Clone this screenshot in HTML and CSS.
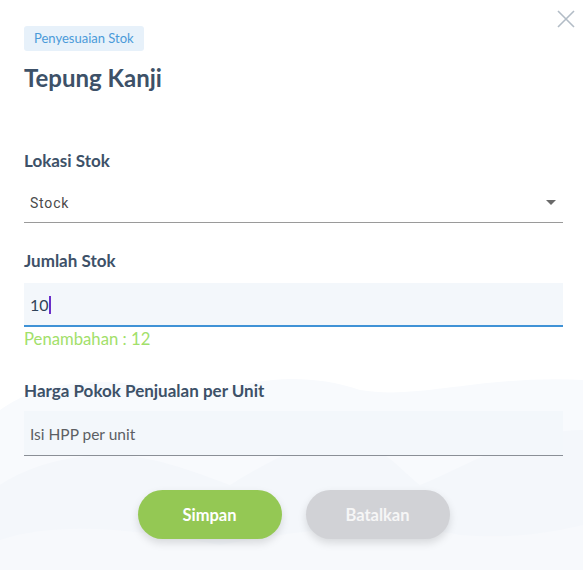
FILE: index.html
```html
<!DOCTYPE html>
<html lang="id">
<head>
<meta charset="utf-8">
<title>Penyesuaian Stok</title>
<link rel="stylesheet" href="styles.css">
</head>
<body>
<div class="modal">
  <svg class="hills" width="583" height="200" viewBox="0 0 583 200" preserveAspectRatio="none" aria-hidden="true">
    <path d="M0 40 C 40 10, 120 0, 200 30 C 240 10, 300 0, 360 20 C 420 30, 480 5, 583 10 L583 200 L0 200 Z" fill="#f8fafd"/>
    <path d="M0 115 C 30 95, 70 85, 110 85 C 150 85, 190 100, 230 115 C 270 90, 310 70, 340 70 C 380 70, 400 100, 420 115 C 470 95, 520 60, 583 60 L583 200 L0 200 Z" fill="#f4f7fb"/>
    <path d="M0 170 C 60 150, 140 160, 220 175 C 300 160, 380 150, 460 165 C 520 170, 560 160, 583 155 L583 200 L0 200 Z" fill="#f7f9fc"/>
  </svg>

  <button class="close" type="button" aria-label="Tutup">
    <svg width="18" height="18" viewBox="0 0 18 18"><path d="M1 1 L17 17 M17 1 L1 17" stroke="#b2bcc6" stroke-width="1.6" fill="none"/></svg>
  </button>

  <span class="badge">Penyesuaian Stok</span>
  <h1 class="title">Tepung Kanji</h1>

  <div class="field field-first">
    <div class="label">Lokasi Stok</div>
    <div class="select">
      <span class="select-value">Stock</span>
      <span class="caret-down"></span>
    </div>
  </div>

  <div class="field field-second">
    <div class="label">Jumlah Stok</div>
    <div class="input input-active"><span class="value">10</span><span class="cursor"></span></div>
    <div class="helper">Penambahan : 12</div>
  </div>

  <div class="field field-third">
    <div class="label">Harga Pokok Penjualan per Unit</div>
    <div class="input input-plain"><span class="placeholder">Isi HPP per unit</span></div>
  </div>

  <div class="actions">
    <button class="btn btn-save" type="button">Simpan</button>
    <button class="btn btn-cancel" type="button">Batalkan</button>
  </div>
</div>
</body>
</html>
```

FILE: styles.css
```css
* { box-sizing: border-box; }
html, body { margin: 0; padding: 0; background: #ffffff; }
body {
  font-family: Lato, "Open Sans", sans-serif;
  color: #3d5168;
  width: 583px;
  height: 570px;
  overflow: hidden;
}
.modal {
  position: relative;
  width: 583px;
  height: 570px;
  padding: 26px 20px 0 24px;
  display: flex;
  flex-direction: column;
  align-items: flex-start;
}
.hills {
  position: absolute;
  left: 0;
  bottom: 0;
  z-index: 0;
}
.modal > *:not(.hills) { position: relative; z-index: 1; }
.close {
  position: absolute !important;
  top: 10px;
  right: 8px;
  width: 18px;
  height: 18px;
  padding: 0;
  border: 0;
  background: none;
  display: block;
}
.close svg { display: block; }
.badge {
  display: inline-block;
  height: 25px;
  line-height: 25px;
  padding: 0 10px;
  font-size: 13px;
  color: #4a9ad9;
  background: #e7f1fa;
  border-radius: 3px;
}
.title {
  margin: 12px 0 0;
  font-size: 24px;
  line-height: 30px;
  font-weight: 700;
  color: #3d5168;
}
.field { width: 539px; display: flex; flex-direction: column; }
.field-first { margin-top: 58px; }
.field-second { margin-top: 28px; }
.field-third { margin-top: 32px; }
.label {
  font-size: 17px;
  line-height: 20px;
  font-weight: 700;
  color: #3d5168;
}
.select {
  display: flex;
  align-items: center;
  justify-content: space-between;
  height: 52px;
  padding: 22px 7px 9px 6px;
  border-bottom: 1px solid #9a9a9a;
}
.select-value {
  font-family: Roboto, "Liberation Sans", sans-serif;
  font-size: 14px;
  line-height: 20px;
  color: #4a4a4a;
  letter-spacing: 0.8px;
}
.caret-down {
  width: 0;
  height: 0;
  border-left: 5px solid transparent;
  border-right: 5px solid transparent;
  border-top: 5px solid #6a6a6a;
  margin-top: -2px;
}
.input {
  display: flex;
  align-items: center;
  background: #f3f7fb;
  padding: 2px 6px 0;
}
.input-active {
  margin-top: 12px;
  height: 44px;
  border-bottom: 2px solid #3f92d6;
}
.input-plain {
  margin-top: 10px;
  height: 45px;
  border-bottom: 1px solid #8a8f96;
}
.value {
  font-size: 16px;
  line-height: 20px;
  color: #2f4358;
}
.cursor {
  width: 2px;
  height: 18px;
  background: #6a2fc9;
  margin-left: 0;
}
.placeholder {
  font-size: 15.5px;
  line-height: 20px;
  color: #5c5f63;
}
.helper {
  margin-top: 2px;
  font-size: 16.7px;
  line-height: 20px;
  color: #a2e06a;
}
.actions {
  width: 539px;
  margin-top: 34px;
  display: flex;
  justify-content: center;
  gap: 24px;
}
.btn {
  width: 144px;
  height: 49px;
  border: 0;
  border-radius: 25px;
  font-family: Lato, "Open Sans", sans-serif;
  font-size: 16.5px;
  font-weight: 700;
  box-shadow: 0 4px 9px rgba(0, 0, 0, 0.13);
}
.btn-save { background: #94c854; color: #ffffff; }
.btn-cancel { background: #d1d2d6; color: #f6f6f6; }
```
